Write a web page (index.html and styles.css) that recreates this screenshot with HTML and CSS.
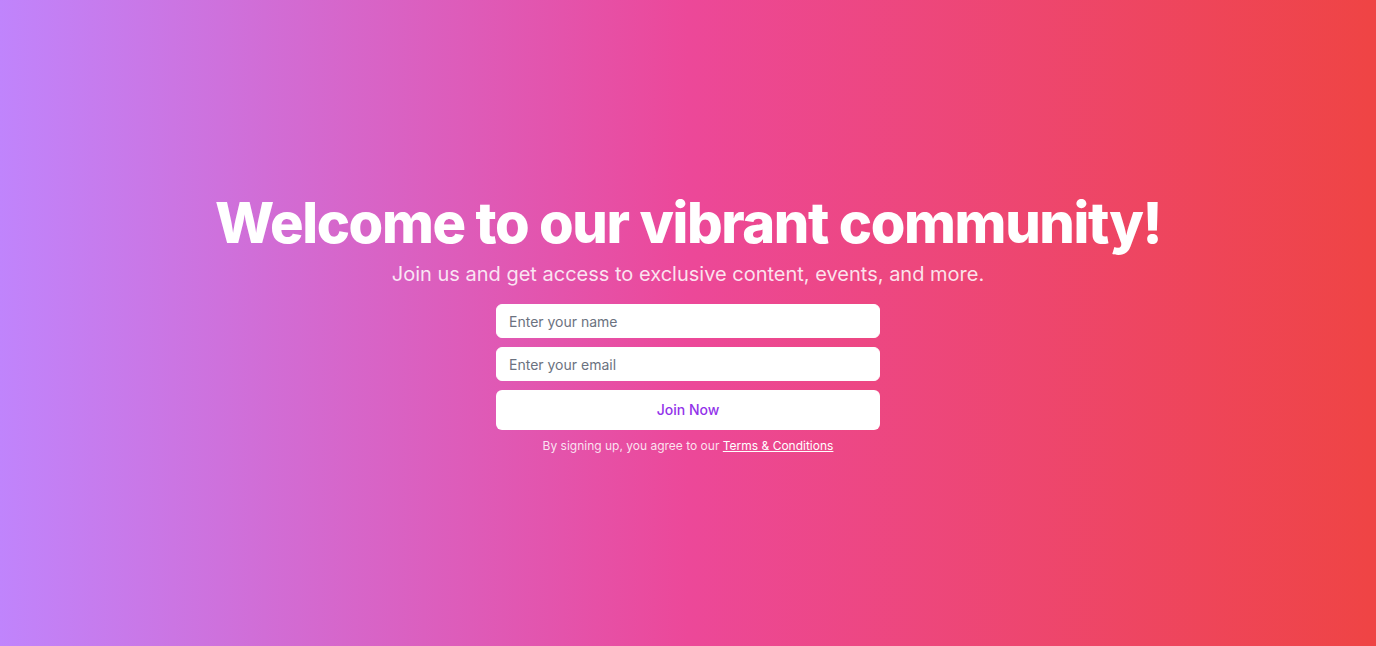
FILE: index.html
```html
<!DOCTYPE html>
<html lang="en">

<head>
  <meta charset="UTF-8">
  <meta name="viewport" content="width=device-width, initial-scale=1.0">
  <title>Join</title>

  <link rel="stylesheet" href="styles.css">
</head>

<body>
  <div class="page">
    <div class="hero">
      <h1 class="title">Welcome to our vibrant community!</h1>
      <p class="lead">Join us and get access to exclusive content, events, and more.</p>
      <form class="join-form" onsubmit="return false">
        <input class="field" type="text" placeholder="Enter your name" />
        <input class="field" type="email" placeholder="Enter your email" />
        <button class="join-btn" type="submit">Join Now</button>
      </form>
      <p class="terms">By signing up, you agree to our <a href="#">Terms &amp; Conditions</a></p>
    </div>
  </div>
</body>

</html>
```

FILE: styles.css
```css
/* 全屏渐变背景 */
body {
  margin: 0;
  font-family: Inter, "Noto Sans", sans-serif;
}

.page {
  min-height: 100vh;
  display: flex;
  align-items: center;
  justify-content: center;
  background: linear-gradient(to right, #c084fc, #ec4899, #ef4444);
  color: #fff;
}

.hero {
  display: flex;
  flex-direction: column;
  align-items: center;
  padding-top: 3px;
  text-align: center;
}

/* 标题 */
.title {
  margin: 0 0 9px;
  font-size: 56px;
  line-height: 1;
  font-weight: 800;
  letter-spacing: -0.025em;
}

.lead {
  margin: 0 0 16px;
  font-size: 20px;
  line-height: 28px;
  color: rgba(255, 255, 255, 0.85);
}

/* 表单 */
.join-form {
  width: 384px;
  display: flex;
  flex-direction: column;
  gap: 9px;
}

.field {
  box-sizing: border-box;
  height: 34px;
  padding: 0 12px;
  border: 1px solid #fff;
  border-radius: 6px;
  background: #fff;
  font-family: inherit;
  font-size: 14px;
  color: #374151;
  outline: none;
}

.field::placeholder {
  color: #6b7280;
}

.join-btn {
  height: 40px;
  padding-bottom: 2px;
  border: none;
  border-radius: 6px;
  background: #fff;
  color: #9333ea;
  font-family: inherit;
  font-size: 14px;
  font-weight: 500;
  cursor: pointer;
}

.terms {
  margin: 8px 0 0;
  font-size: 12px;
  line-height: 16px;
  color: rgba(255, 255, 255, 0.85);
}

.terms a {
  color: #fff;
  text-decoration: underline;
}
```
